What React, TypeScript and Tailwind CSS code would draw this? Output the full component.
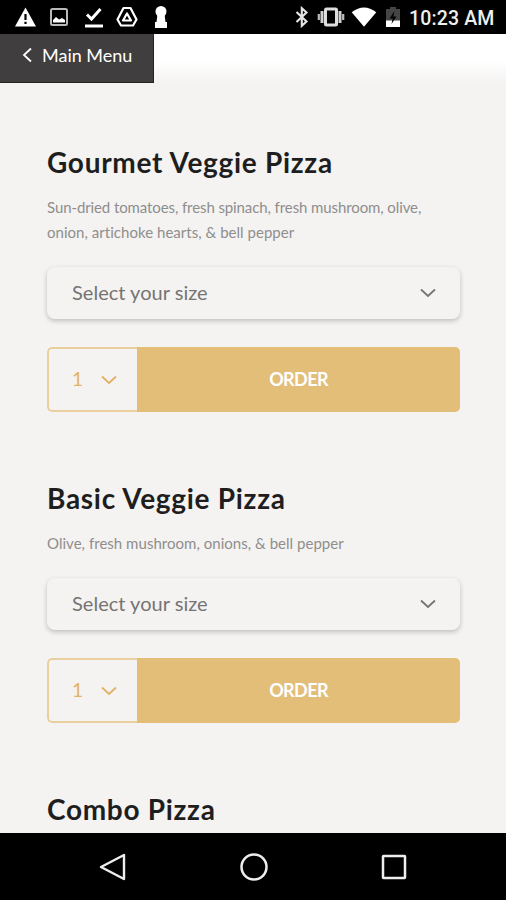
import { useState } from "react";

type Pizza = { name: string; description: string[] };

const PIZZAS: Pizza[] = [
  {
    name: "Gourmet Veggie Pizza",
    description: ["Sun-dried tomatoes, fresh spinach, fresh mushroom, olive,", "onion, artichoke hearts, & bell pepper"],
  },
  { name: "Basic Veggie Pizza", description: ["Olive, fresh mushroom, onions, & bell pepper"] },
];

export default function App() {
  return (
    <div className="flex h-[900px] w-[506px] flex-col overflow-hidden bg-[#f4f3f2] font-['Lato','Liberation_Sans',sans-serif]">
      <StatusBar />
      <header className="flex h-[49px] shrink-0 bg-gradient-to-b from-white from-55% to-[#f4f3f2]">
        <button className="flex h-[49px] w-[154px] items-start border-r border-b border-[#242223] bg-[#403e3f] pt-[9px] pl-[22px] text-white">
          <svg className="mt-1 h-4 w-[11px]" viewBox="0 0 11 16" fill="none" stroke="currentColor" strokeWidth="1.8">
            <path d="M9 1.5 2 8l7 6.5" />
          </svg>
          <span className="ml-[9px] text-[18px] leading-6 whitespace-nowrap">Main Menu</span>
        </button>
      </header>

      <main className="min-h-0 flex-1 space-y-[70px] pt-[63px] pr-[46px] pl-[47px]">
        {PIZZAS.map((pizza) => (
          <MenuItem key={pizza.name} pizza={pizza} />
        ))}
        <ItemTitle>Combo Pizza</ItemTitle>
      </main>

      <NavBar />
    </div>
  );
}

function ItemTitle({ children }: { children: string }) {
  return (
    <h2 className="text-[28px] leading-8 font-bold tracking-[0.7px] whitespace-nowrap text-[#1f1e1e]">{children}</h2>
  );
}

function MenuItem({ pizza }: { pizza: Pizza }) {
  const [quantity, setQuantity] = useState(1);

  return (
    <section>
      <ItemTitle>{pizza.name}</ItemTitle>
      <div className="mt-[17px] text-[15px] leading-[25px] tracking-[0.03px] whitespace-nowrap text-[#8f8e8d]">
        {pizza.description.map((line) => (
          <p key={line} className="first:not-last:tracking-[-0.1px]">
            {line}
          </p>
        ))}
      </div>

      <button className="mt-[22px] flex h-[52px] w-full items-center justify-between rounded-lg bg-[#f4f3f2] pr-6 pl-[25px] text-[20px] text-[#757473] shadow-[0_2px_5px_rgba(0,0,0,0.22)]">
        <span className="pb-0.5 tracking-[0.02px]">Select your size</span>
        <Chevron />
      </button>

      <div className="mt-7 flex h-[65px] overflow-hidden rounded-[5px]">
        <button
          onClick={() => setQuantity((q) => q + 1)}
          className="flex w-[90px] items-center rounded-l-[5px] border-2 border-r-0 border-[#e9cf9d] pl-[23px] text-[19px] text-[#e2b264]"
        >
          <span className="w-[29px] pb-px text-left">{quantity}</span>
          <Chevron />
        </button>
        <button className="flex-1 bg-[#e2be78] text-[18px] font-bold tracking-[-0.6px] text-white">ORDER</button>
      </div>
    </section>
  );
}

function Chevron() {
  return (
    <svg className="h-[10px] w-4" viewBox="0 0 16 10" fill="none" stroke="currentColor" strokeWidth="1.8">
      <path d="m1 1.5 7 6.5 7-6.5" />
    </svg>
  );
}

function StatusBar() {
  return (
    <div className="flex h-[34px] shrink-0 items-center bg-black text-white">
      <svg className="ml-[14px] h-[22px] w-[23px]" viewBox="0 0 23 22">
        <path d="M11.5 1.5 22 20.5H1z" fill="white" />
        <path d="M11.5 8v6M11.5 15.8v2.2" stroke="black" strokeWidth="2.2" />
      </svg>
      <svg className="ml-3 h-5 w-5" viewBox="0 0 20 20">
        <rect x="2" y="2" width="16" height="16" rx="1.5" fill="none" stroke="#b9b9b9" strokeWidth="2" />
        <path d="M4 15.5v-2.5l3-3 3 2.5 3-1.5 3 2v2.5z" fill="white" />
      </svg>
      <svg className="ml-[15px] h-[22px] w-5" viewBox="0 0 20 22" fill="none" stroke="white">
        <path d="m3 8.5 4.5 4.5L16.5 3" strokeWidth="3" />
        <path d="M1 20h18" strokeWidth="3" />
      </svg>
      <svg className="ml-3 h-[22px] w-[22px]" viewBox="0 0 22 22" fill="none" stroke="white" strokeLinejoin="round">
        <path d="M7.5 2h7l6 11.5-3.5 6H5l-3.5-6z" strokeWidth="2.2" />
        <path d="m11 7.5-4 7h8z" strokeWidth="2.2" />
      </svg>
      <svg className="ml-[16px] h-6 w-[14px]" viewBox="0 0 14 24" fill="white">
        <circle cx="7" cy="6.5" r="5.5" />
        <path d="M3.5 9h7l1 8H13v6H1v-6h1.5z" />
      </svg>

      <svg className="ml-[127px] h-[22px] w-[14px]" viewBox="0 0 14 22" fill="none" stroke="#e6e6e6" strokeWidth="2.1">
        <path d="m1.5 6 10 9.5-4.7 4.3V2.2l4.7 4.3-10 9.5" />
      </svg>
      <svg className="ml-[8px] h-[22px] w-7" viewBox="0 0 28 22">
        <rect x="8.5" y="3" width="11" height="16" rx="1" fill="none" stroke="#dedede" strokeWidth="3" />
        <path d="M5 5v12M23 5v12" stroke="#cfcfcf" strokeWidth="3" />
        <path d="M1.8 8v6M26.2 8v6" stroke="#bdbdbd" strokeWidth="2.2" />
      </svg>
      <svg className="ml-[6px] h-[22px] w-[26px]" viewBox="0 0 26 22">
        <path d="M.7 6.2Q13-3.4 25.3 6.2L13 20.8z" fill="white" />
      </svg>
      <svg className="ml-[9px] h-[22px] w-[14px]" viewBox="0 0 14 22">
        <path d="M4 1h6v2h4v18H0V3h4z" fill="#454545" />
        <path d="M0 14.5h14V21H0z" fill="white" />
        <path d="M8.5 5 3.5 12.5h3.2L5.5 18l5-7.5H7.3z" fill="black" />
      </svg>
      <span className="mt-[3px] ml-[9px] font-['Roboto',sans-serif] text-[19.5px] font-medium tracking-[0.15px] whitespace-nowrap text-[#eeeeee]">
        10:23 AM
      </span>
    </div>
  );
}

function NavBar() {
  return (
    <nav className="flex h-[67px] shrink-0 items-center bg-black pl-[99px]">
      <svg className="h-7 w-7" viewBox="0 0 28 28" fill="none" stroke="#eeeeee" strokeWidth="2.4" strokeLinejoin="round">
        <path d="M25 2v24L2 14z" />
      </svg>
      <svg className="ml-[112px] h-[30px] w-[30px]" viewBox="0 0 30 30" fill="none" stroke="#eeeeee" strokeWidth="2.5">
        <circle cx="15" cy="15" r="12.5" />
      </svg>
      <svg className="ml-[112px] h-[26px] w-[26px]" viewBox="0 0 26 26" fill="none" stroke="#eeeeee" strokeWidth="2.5">
        <rect x="2" y="2" width="22" height="22" rx="0.5" />
      </svg>
    </nav>
  );
}
